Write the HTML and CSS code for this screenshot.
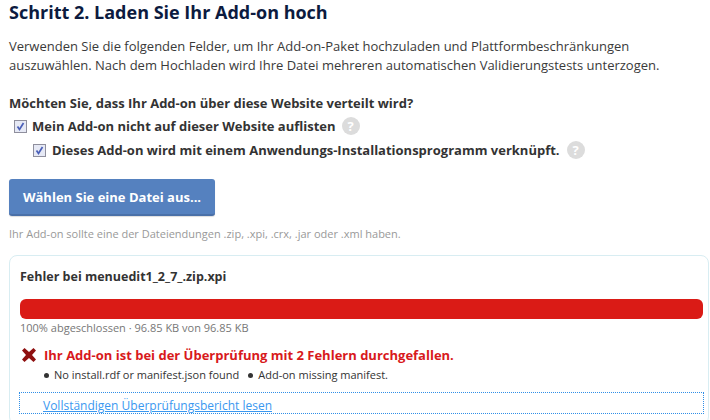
FILE: index.html
```html
<!DOCTYPE html>
<html lang="de">
<head>
<meta charset="utf-8">
<title>Schritt 2</title>
<link rel="stylesheet" href="styles.css">
</head>
<body>
<h2 class="title">Schritt 2. Laden Sie Ihr Add-on hoch</h2>
<p class="intro">Verwenden Sie die folgenden Felder, um Ihr Add-on-Paket hochzuladen und Plattformbeschränkungen auszuwählen. Nach dem Hochladen wird Ihre Datei mehreren automatischen Validierungstests unterzogen.</p>
<p class="question">Möchten Sie, dass Ihr Add-on über diese Website verteilt wird?</p>
<label class="check">
  <svg class="box" viewBox="0 0 13 13"><rect x=".5" y=".5" width="12" height="12" fill="#e6e9f5" stroke="#8f8f9d"/><path d="M3.500 6.500l2 3L9.500 3" fill="none" stroke="#4a5fb8" stroke-width="1.700"/></svg>
  <span>Mein Add-on nicht auf dieser Website auflisten</span>
  <span class="help">?</span>
</label>
<label class="check nested">
  <svg class="box" viewBox="0 0 13 13"><rect x=".5" y=".5" width="12" height="12" fill="#e6e9f5" stroke="#8f8f9d"/><path d="M3.500 6.500l2 3L9.500 3" fill="none" stroke="#4a5fb8" stroke-width="1.700"/></svg>
  <span>Dieses Add-on wird mit einem Anwendungs-Installationsprogramm verknüpft.</span>
  <span class="help">?</span>
</label>
<button class="upload">Wählen Sie eine Datei aus...</button>
<p class="hint">Ihr Add-on sollte eine der Dateiendungen .zip, .xpi, .crx, .jar oder .xml haben.</p>
<section class="card">
  <h3 class="file">Fehler bei menuedit1_2_7_.zip.xpi</h3>
  <div class="bar"></div>
  <p class="progress">100% abgeschlossen · 96.85 KB von 96.85 KB</p>
  <div class="error">
    <svg class="x" viewBox="0 0 16 16"><path d="M1 3.500L3.500 1 8 5l4.500-4L15 3.500 11 8l4 4.500L12.500 15 8 11l-4.500 4L1 12.500 5 8z" fill="#8f1010"/></svg>
    <strong>Ihr Add-on ist bei der Überprüfung mit 2 Fehlern durchgefallen.</strong>
  </div>
  <ul class="msgs">
    <li>No install.rdf or manifest.json found</li>
    <li>Add-on missing manifest.</li>
  </ul>
  <div class="report"><a href="#">Vollständigen Überprüfungsbericht lesen</a></div>
</section>
</body>
</html>
```
FILE: styles.css
```css
html, body { margin: 0; padding: 0; }
body {
  width: 710px;
  height: 420px;
  overflow: hidden;
  background: #fff;
  font-family: "Open Sans", sans-serif;
  color: #333;
  font-size: 13px;
  box-sizing: border-box;
  padding: 0 0 0 9px;
}
.title {
  margin: 0;
  font-size: 18px;
  line-height: 25px;
  font-weight: 700;
  color: #0c1b3f;
}
.intro {
  margin: 12px 0 0;
  line-height: 19px;
  width: 680px;
  color: #3a3a3a;
}
.question {
  margin: 19px 0 0;
  font-weight: 700;
  line-height: 18px;
}
.check {
  display: flex;
  align-items: center;
  gap: 5px;
  margin: 5px 0 0 5px;
  font-weight: 700;
  line-height: 18px;
  font-size: 13px;
}
.nested { margin-left: 24px; margin-top: 6px; gap: 6px; }
.box { width: 13px; height: 13px; flex: none; }
.help {
  width: 18px;
  height: 18px;
  margin-left: 1px;
  border-radius: 50%;
  background: #dcdcdc;
  color: #fff;
  font-size: 13px;
  line-height: 18px;
  text-align: center;
  font-weight: 700;
}
.upload {
  display: block;
  margin: 20px 0 0;
  width: 206px;
  height: 37px;
  border: 0;
  border-bottom: 2px solid #4a70a8;
  border-radius: 3px;
  background: #5581bf;
  color: #fff;
  font: 700 13px "Open Sans", sans-serif;
  box-shadow: 0 1px 1px #ddd;
  padding: 0;
}
.hint {
  margin: 10px 0 0;
  font-size: 11px;
  line-height: 16px;
  color: #999;
}
.card {
  margin: 13px 0 0;
  height: 170px;
  width: 700px;
  box-sizing: border-box;
  border: 1px solid #d8edf2;
  border-radius: 8px;
  padding: 11px 10px 0;
}
.file {
  margin: 0;
  font-size: 12.500px;
  font-weight: 700;
  line-height: 20px;
}
.bar {
  margin-top: 12px;
  height: 20px;
  width: 683px;
  background: #da1b16;
  border-radius: 6px;
}
.progress {
  margin: 1px 0 0;
  font-size: 11px;
  line-height: 16px;
  color: #777;
}
.error {
  display: flex;
  align-items: center;
  gap: 7px;
  margin-top: 10px;
  padding-left: 1px;
  font-size: 13px;
  line-height: 18px;
  color: #d8191c;
}
.x { width: 16px; height: 16px; flex: none; }
.msgs {
  display: flex;
  gap: 9px;
  margin: 2px 0 0;
  padding: 0 0 0 24px;
  list-style: none;
  font-size: 11px;
  line-height: 17px;
}
.msgs li::before {
  content: "";
  display: inline-block;
  width: 5px;
  height: 5px;
  border-radius: 50%;
  background: #333;
  margin: 0 5px 1px 0;
}
.report {
  margin: 9px 0 0 -1px;
  height: 22px;
  width: 685px;
  box-sizing: border-box;
  border: 1px dotted #2f8fe8;
  padding-left: 23px;
  font-size: 12px;
  line-height: 25px;
}
.report a { color: #3a98f0; }
```
